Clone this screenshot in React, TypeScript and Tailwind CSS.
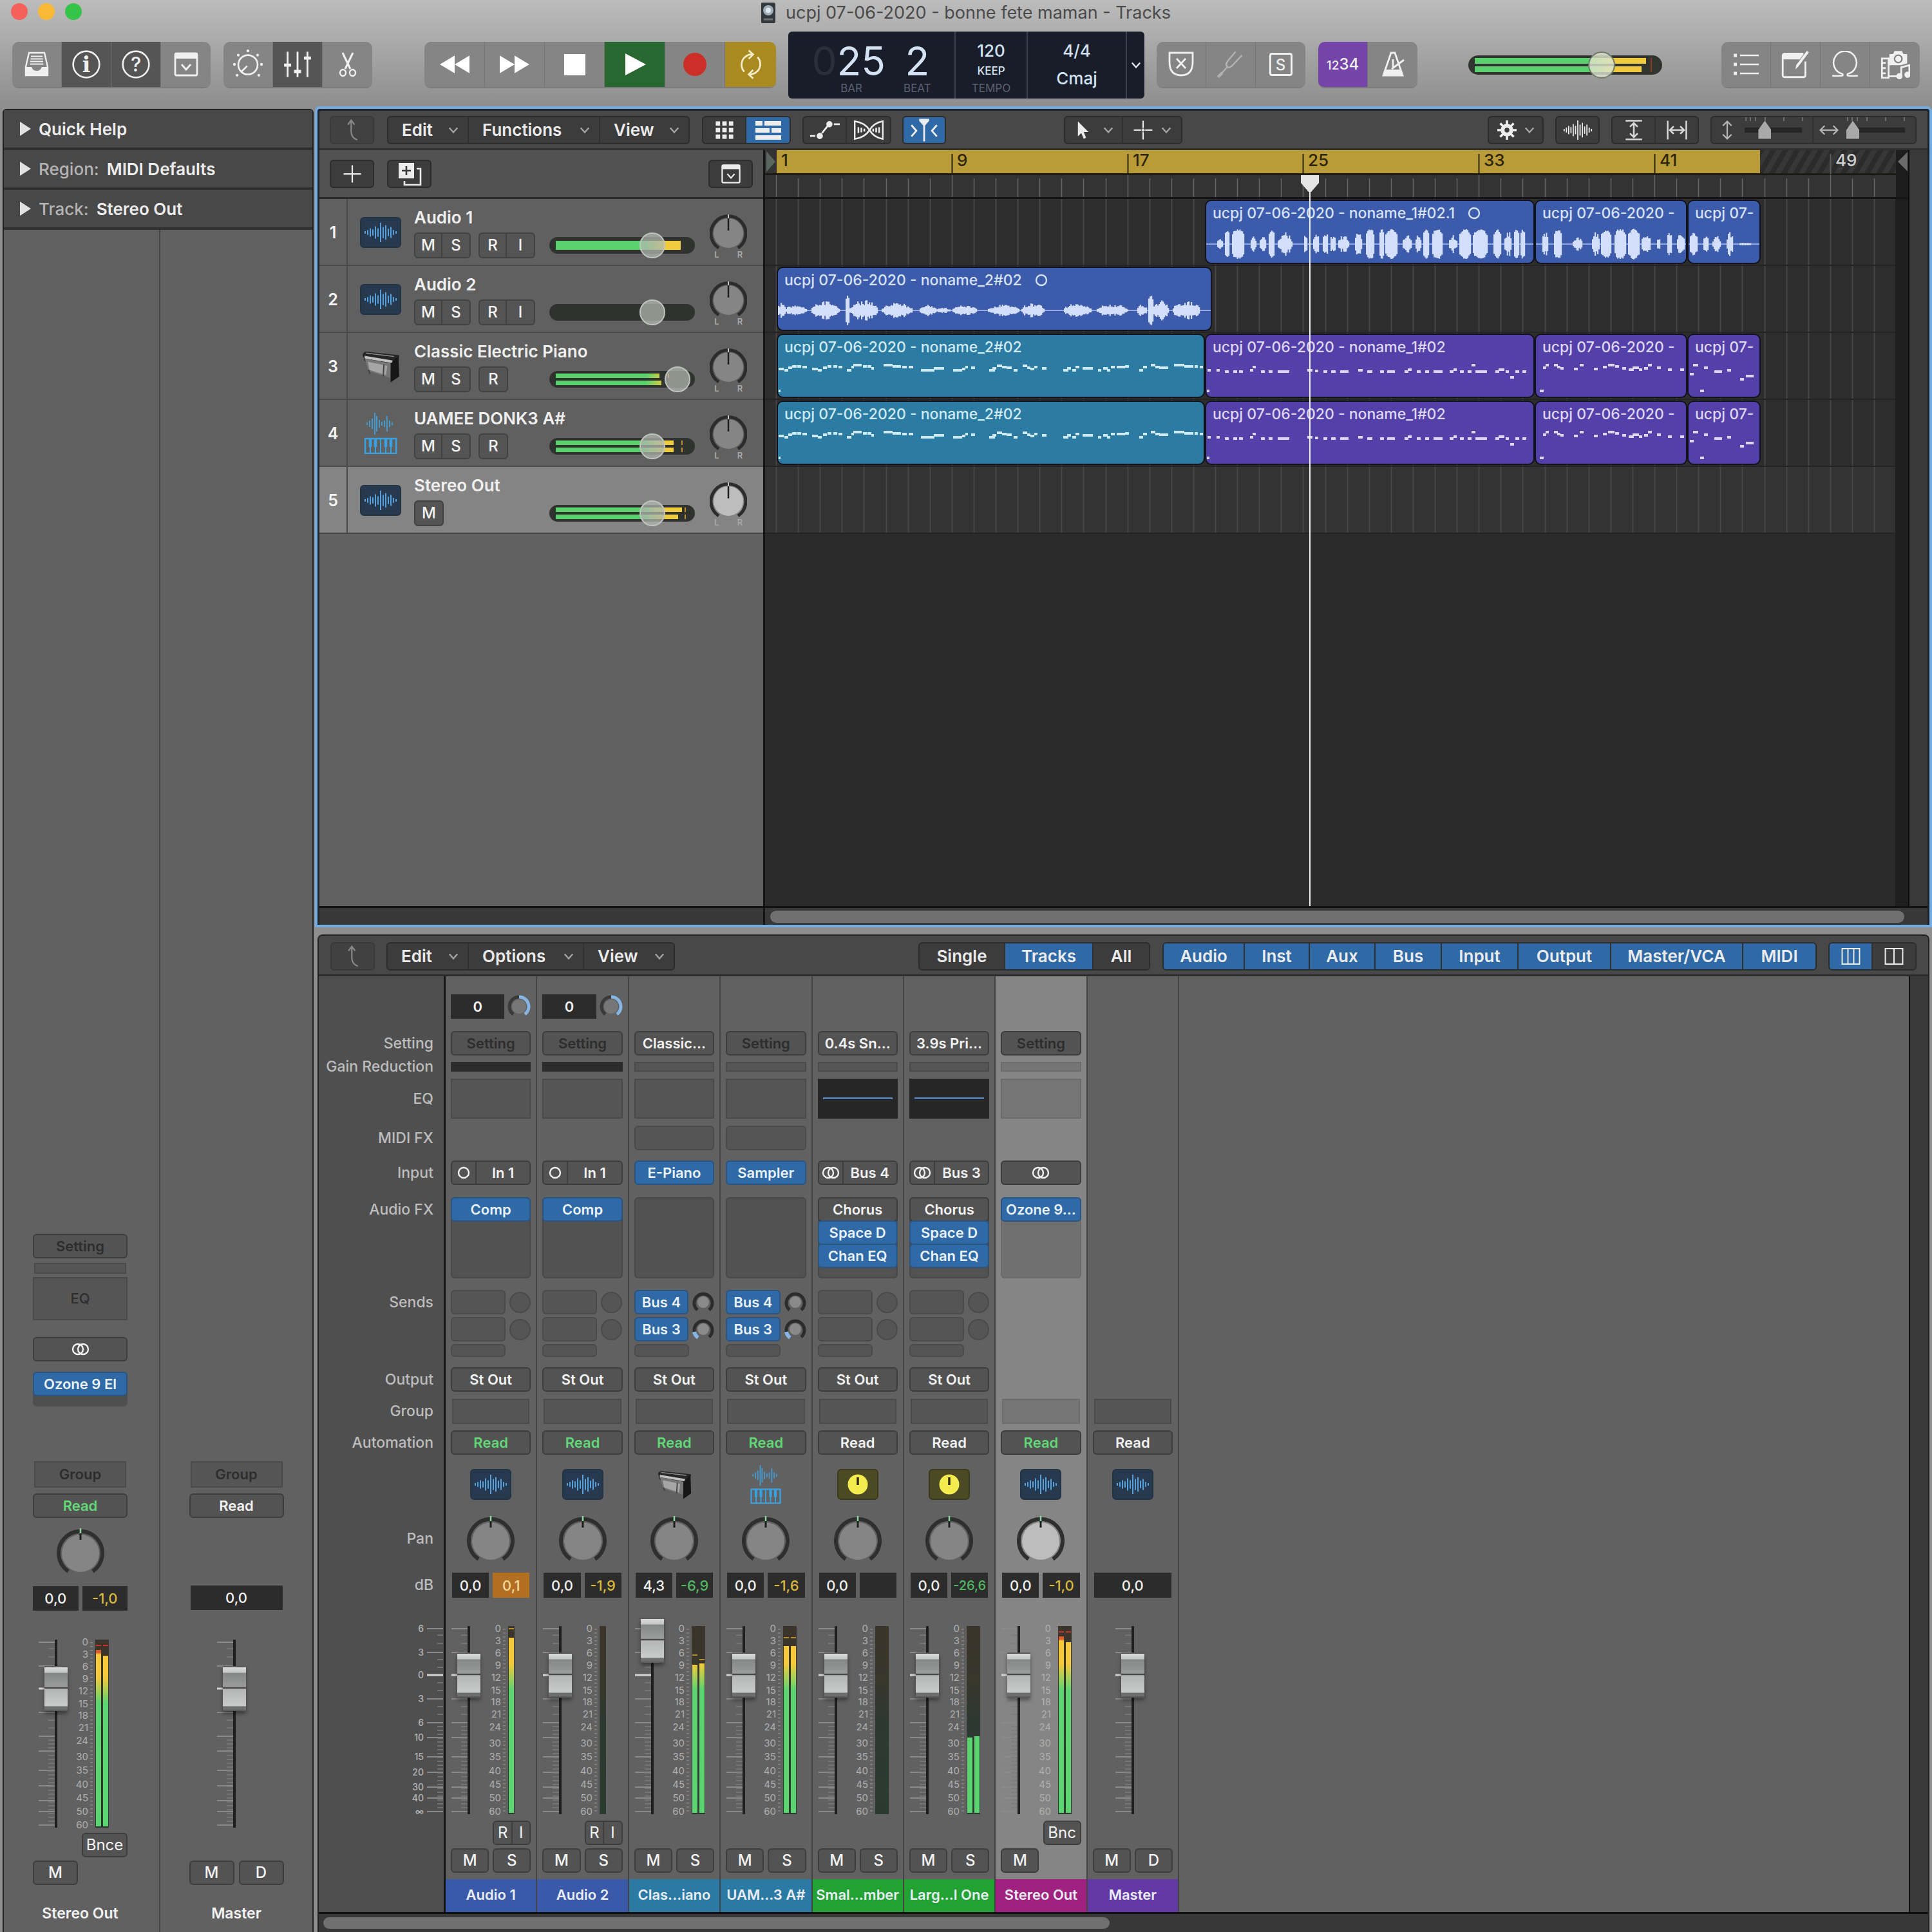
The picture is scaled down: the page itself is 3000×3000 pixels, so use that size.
import type { ReactNode } from 'react'
import clsx from 'clsx'

// ---------------------------------------------------------------------------
// Session data
// ---------------------------------------------------------------------------

type Blob = [from: number, to: number, amp: number]
type Note = [x: number, y: number, w: number]
type IconKind = 'audio' | 'piano' | 'sampler' | 'aux'

type Region = {
  x: number
  w: number
  name: string
  tone: 'blue' | 'teal' | 'violet'
  loop?: boolean
  wave?: Blob[]
  mid?: number
  notes?: Note[]
}

type Track = {
  name: string
  icon: IconKind
  buttons: string[][]
  value: number
  levels: number[]
  peaks?: number[]
  selected?: boolean
  regions: Region[]
}

const WAVE_A: Blob[] = [
  [17, 26, 0.4], [29, 36, 0.95], [40, 59, 1], [69, 78, 0.65], [83, 93, 0.65], [97, 106, 0.95],
  [111, 134, 0.8], [152, 157, 0.7], [166, 175, 0.8], [181, 189, 0.9], [193, 201, 0.7], [205, 222, 0.6],
  [231, 242, 0.9], [248, 261, 1], [269, 276, 1], [278, 297, 1], [305, 319, 0.6], [325, 334, 0.7],
  [337, 346, 0.95], [351, 367, 1], [377, 390, 0.6], [393, 411, 1], [414, 437, 1], [446, 458, 0.95],
  [463, 474, 0.9], [478, 486, 1], [488, 495, 0.95],
]
const WAVE_B: Blob[] = [
  [10, 19, 0.8], [28, 40, 1], [57, 72, 0.45], [87, 99, 0.8], [101, 117, 0.95], [122, 140, 1],
  [143, 161, 1], [164, 178, 0.7], [188, 193, 0.5], [204, 211, 0.9], [219, 231, 0.8],
]
const WAVE_C: Blob[] = [[2, 14, 0.9], [23, 31, 0.75], [37, 50, 0.55], [59, 69, 0.8], [79, 97, 0.12]]
const WAVE_D: Blob[] = [
  [0, 12, 0.5], [12, 45, 0.38], [52, 96, 0.6], [105, 111, 1], [111, 155, 0.68], [161, 209, 0.5],
  [220, 246, 0.38], [246, 268, 0.18], [271, 309, 0.36], [326, 375, 0.38], [378, 414, 0.5],
  [444, 487, 0.48], [495, 544, 0.42], [558, 573, 0.4], [575, 583, 1], [583, 607, 0.65], [613, 655, 0.65],
]

const NOTES_TEAL: Note[] = [
  [1, 52, 8], [10, 54, 6], [16, 50, 6], [22, 48, 7], [30, 48, 6], [38, 49, 7],
  [53, 52, 9], [62, 54, 6], [70, 50, 6], [77, 48, 6], [86, 48, 6], [94, 49, 6],
  [107, 54, 7], [114, 49, 4], [117, 46, 13], [132, 48, 6], [139, 48, 6], [145, 51, 4],
  [164, 46, 14], [178, 48, 13], [193, 49, 7], [203, 49, 7], [222, 54, 21], [242, 51, 16],
  [272, 54, 14], [286, 52, 5], [291, 49, 4], [300, 50, 6], [328, 54, 9], [333, 51, 6], [340, 47, 8],
  [348, 49, 7], [355, 50, 8], [366, 54, 6], [380, 47, 7], [387, 50, 5], [392, 52, 6], [398, 49, 5],
  [410, 51, 7], [443, 54, 8], [449, 51, 6], [457, 54, 6], [462, 49, 6], [473, 51, 16], [497, 54, 5],
  [505, 51, 7], [511, 54, 5], [517, 49, 6], [526, 49, 13], [539, 48, 6], [561, 54, 6], [567, 49, 6],
  [579, 46, 7], [586, 49, 7], [592, 50, 14], [615, 46, 16], [631, 48, 14], [647, 48, 5], [655, 49, 5],
  [1, 86, 3],
]
const NOTES_V1: Note[] = [
  [2, 54, 5], [16, 54, 5], [29, 56, 6], [42, 56, 6], [51, 56, 6], [68, 54, 5], [72, 49, 5], [85, 56, 6],
  [97, 56, 6], [111, 56, 18], [157, 54, 8], [169, 55, 5], [182, 56, 6], [194, 56, 7], [208, 56, 13],
  [236, 54, 7], [250, 56, 8], [270, 56, 6], [281, 56, 12], [308, 56, 6], [313, 53, 6], [327, 56, 6],
  [340, 56, 6], [353, 56, 14], [378, 56, 6], [384, 53, 5], [394, 56, 6], [406, 56, 6], [412, 46, 6],
  [418, 56, 18], [449, 56, 6], [454, 53, 9], [465, 56, 5], [472, 65, 6], [480, 56, 6], [491, 56, 6],
  [1, 86, 4],
]
const NOTES_V2: Note[] = [
  [11, 50, 5], [15, 46, 5], [28, 46, 6], [33, 49, 5], [38, 51, 5], [59, 52, 6], [68, 46, 6], [90, 52, 6],
  [104, 49, 6], [112, 46, 10], [123, 48, 6], [134, 51, 6], [144, 53, 8], [150, 50, 10], [160, 53, 5],
  [168, 51, 6], [174, 46, 6], [188, 50, 6], [205, 53, 6], [224, 53, 6], [6, 86, 6],
]
const NOTES_V3: Note[] = [
  [2, 60, 6], [7, 46, 8], [24, 50, 6], [40, 56, 12], [60, 54, 6], [80, 68, 6], [89, 63, 12], [18, 86, 6],
]

const MIDI_REGIONS: Region[] = [
  { x: 18, w: 665, name: 'ucpj 07-06-2020 - noname_2#02', tone: 'teal', notes: NOTES_TEAL },
  { x: 683, w: 512, name: 'ucpj 07-06-2020 - noname_1#02', tone: 'violet', notes: NOTES_V1 },
  { x: 1195, w: 237, name: 'ucpj 07-06-2020 -', tone: 'violet', notes: NOTES_V2 },
  { x: 1432, w: 114, name: 'ucpj 07-', tone: 'violet', notes: NOTES_V3 },
]

const TRACKS: Track[] = [
  {
    name: 'Audio 1', icon: 'audio', buttons: [['M', 'S'], ['R', 'I']], value: 75, levels: [194],
    regions: [
      { x: 683, w: 512, name: 'ucpj 07-06-2020 - noname_1#02.1', tone: 'blue', loop: true, wave: WAVE_A, mid: 67 },
      { x: 1195, w: 237, name: 'ucpj 07-06-2020 -', tone: 'blue', wave: WAVE_B, mid: 67 },
      { x: 1432, w: 114, name: 'ucpj 07-', tone: 'blue', wave: WAVE_C, mid: 67 },
    ],
  },
  {
    name: 'Audio 2', icon: 'audio', buttons: [['M', 'S'], ['R', 'I']], value: 75, levels: [],
    regions: [
      { x: 18, w: 676, name: 'ucpj 07-06-2020 - noname_2#02', tone: 'blue', loop: true, wave: WAVE_D, mid: 66 },
    ],
  },
  {
    name: 'Classic Electric Piano', icon: 'piano', buttons: [['M', 'S'], ['R']], value: 96,
    levels: [161, 164], peaks: [176], regions: MIDI_REGIONS,
  },
  {
    name: 'UAMEE DONK3 A#', icon: 'sampler', buttons: [['M', 'S'], ['R']], value: 75,
    levels: [183, 183], peaks: [197, 197], regions: MIDI_REGIONS,
  },
  {
    name: 'Stereo Out', icon: 'audio', buttons: [['M']], value: 75, levels: [196, 190],
    peaks: [202, 202], selected: true, regions: [],
  },
]

type Meter = { levels: number[]; peaks?: number[]; hot?: boolean; mono?: boolean }

type Channel = {
  name: string
  tint: string
  gain?: boolean
  setting?: string
  reduction?: boolean
  curve?: boolean
  instrument?: string
  input?: string
  stereo?: boolean
  fx: string[]
  sends?: string[]
  output?: boolean
  read: boolean
  icon: IconKind
  pan?: boolean
  db: string
  peak?: string
  peakTone?: string
  fader: number
  meter?: Meter
  extra?: string[]
  buttons: string[]
  selected?: boolean
}

// fader and meter values are pixels on the 292px travel
const CHANNELS: Channel[] = [
  {
    name: 'Audio 1', tint: 'bg-[#3b59a9]', gain: true, setting: '', reduction: true, input: 'In 1',
    fx: ['Comp'], sends: [], output: true, read: true, icon: 'audio', pan: true, db: '0,0', peak: '0,1',
    peakTone: 'bg-[#b26f22] text-[#f3d9a0]', fader: 216, meter: { levels: [18], peaks: [4], mono: true },
    extra: ['R', 'I'], buttons: ['M', 'S'],
  },
  {
    name: 'Audio 2', tint: 'bg-[#3b59a9]', gain: true, setting: '', reduction: true, input: 'In 1',
    fx: ['Comp'], sends: [], output: true, read: true, icon: 'audio', pan: true, db: '0,0', peak: '-1,9',
    peakTone: 'text-[#dcb93c]', fader: 216, meter: { levels: [292], mono: true }, extra: ['R', 'I'],
    buttons: ['M', 'S'],
  },
  {
    name: 'Clas...iano', tint: 'bg-[#2b7aa3]', setting: 'Classic...', instrument: 'E-Piano', fx: [],
    sends: ['Bus 4', 'Bus 3'], output: true, read: true, icon: 'piano', pan: true, db: '4,3', peak: '-6,9',
    peakTone: 'text-[#52b862]', fader: 270, meter: { levels: [60, 58], peaks: [45, 52] }, buttons: ['M', 'S'],
  },
  {
    name: 'UAM...3 A#', tint: 'bg-[#2b7aa3]', setting: '', instrument: 'Sampler', fx: [],
    sends: ['Bus 4', 'Bus 3'], output: true, read: true, icon: 'sampler', pan: true, db: '0,0', peak: '-1,6',
    peakTone: 'text-[#dcb93c]', fader: 216, meter: { levels: [31, 31], peaks: [18, 18] }, buttons: ['M', 'S'],
  },
  {
    name: 'Smal...mber', tint: 'bg-[#23a234]', setting: '0.4s Sn...', curve: true, input: 'Bus 4', stereo: true,
    fx: ['Chorus', 'Space D', 'Chan EQ'], sends: [], output: true, read: false, icon: 'aux', pan: true,
    db: '0,0', peak: '', fader: 216, meter: { levels: [292, 292] }, buttons: ['M', 'S'],
  },
  {
    name: 'Larg...l One', tint: 'bg-[#23a234]', setting: '3.9s Pri...', curve: true, input: 'Bus 3', stereo: true,
    fx: ['Chorus', 'Space D', 'Chan EQ'], sends: [], output: true, read: false, icon: 'aux', pan: true,
    db: '0,0', peak: '-26,6', peakTone: 'text-[#52b862]', fader: 216, meter: { levels: [173, 171] },
    buttons: ['M', 'S'],
  },
  {
    name: 'Stereo Out', tint: 'bg-[#a0217f]', setting: '', input: '', stereo: true, fx: ['Ozone 9...'], read: true,
    icon: 'audio', pan: true, db: '0,0', peak: '-1,0', peakTone: 'text-[#dcb93c]', fader: 216,
    meter: { levels: [16, 25], peaks: [9, 9], hot: true }, extra: ['Bnc'], buttons: ['M'], selected: true,
  },
  {
    name: 'Master', tint: 'bg-[#6439a6]', fx: [], read: false, icon: 'audio', db: '0,0', fader: 216,
    buttons: ['M', 'D'],
  },
]

// Rows of a mixer strip. The label column uses the same ones so both line up.
const ROW = {
  gain: 'mt-7 h-[38px]',
  setting: 'mt-[19px] h-[38px]',
  reduction: 'mt-[10px] h-[15px]',
  eq: 'mt-[11px] h-[62px]',
  midi: 'mt-[11px] h-[38px]',
  input: 'mt-4 h-[38px]',
  fx: 'mt-[19px] h-[126px]',
  sends: 'mt-[18px] h-[104px]',
  output: 'mt-4 h-[38px]',
  group: 'mt-[11px] h-[39px]',
  read: 'mt-[10px] h-[38px]',
  icon: 'mt-[21px] h-[49px]',
  pan: 'mt-[23px] h-[74px]',
  db: 'mt-4 h-[39px]',
  fader: 'mt-[44px] h-[292px]',
  extra: 'mt-[10px] h-[38px]',
  mute: 'mt-[5px] h-[38px]',
  name: 'mt-[10px] h-[51px]',
}

const METER_MARKS: [string, number][] = [
  ['0', 4], ['3', 23], ['6', 42], ['9', 61], ['12', 80], ['15', 100], ['18', 118], ['21', 137],
  ['24', 157], ['30', 182], ['35', 203], ['40', 225], ['45', 246], ['50', 267], ['60', 288],
]
const FADER_MARKS: [string, number][] = [
  ['6', 4], ['3', 41], ['0', 76], ['3', 113], ['6', 150], ['10', 173], ['15', 203], ['20', 227],
  ['30', 250], ['40', 267], ['∞', 288],
]
const MINOR_MARKS = [14, 27, 52, 64, 88, 100, 125, 137].concat(
  Array.from({ length: 22 }, (_, i) => 156 + i * 6),
)

// ---------------------------------------------------------------------------
// Icons
// ---------------------------------------------------------------------------

function Glyph({ children, size = 40, fill = 'none', w = 2.4 }: { children: ReactNode; size?: number; fill?: string; w?: number }) {
  return (
    <svg
      width={size}
      height={size}
      viewBox="0 0 40 40"
      fill={fill}
      stroke="currentColor"
      strokeWidth={w}
      className="shrink-0"
      aria-hidden="true"
    >
      {children}
    </svg>
  )
}

const Chevron = ({ className = 'text-[#a5a5a5]' }: { className?: string }) => (
  <svg width="16" height="12" viewBox="0 0 18 12" className={clsx('shrink-0', className)} aria-hidden="true">
    <path d="M2 2l7 8 7-8" fill="none" stroke="currentColor" strokeWidth="2.6" />
  </svg>
)

const LibraryIcon = () => (
  <Glyph>
    <path d="M8 2h24l5 22v13H3V24z" />
    <path d="M11 7.500h18M10.500 11.500h19M10 15.500h20M9.500 19.500h21" strokeWidth="1.800" />
    <path d="M3 24h9q2 6 8 6t8-6h9v13H3z" fill="currentColor" stroke="none" />
  </Glyph>
)
const InfoIcon = () => (
  <Glyph size={44}>
    <circle cx="20" cy="20" r="18.500" />
    <text x="20" y="31" textAnchor="middle" fontFamily="DejaVu Serif" fontWeight="700" fontSize="30" fill="currentColor" stroke="none">i</text>
  </Glyph>
)
const HelpIcon = () => (
  <Glyph size={44}>
    <circle cx="20" cy="20" r="18.500" />
    <text x="20" y="30" textAnchor="middle" fontSize="28" fontWeight="500" fill="currentColor" stroke="none">?</text>
  </Glyph>
)
const DropPanelIcon = ({ size = 40 }: { size?: number }) => (
  <Glyph size={size} w={2.8}>
    <rect x="3" y="3" width="34" height="34" rx="2" />
    <path d="M3 3h34v8H3z" fill="currentColor" stroke="none" />
    <path d="M13 20l7 8 7-8" />
  </Glyph>
)
const DialIcon = () => (
  <Glyph size={48} w={2.2}>
    <circle cx="20" cy="20.500" r="12.500" />
    <path d="M11 30l8-8" />
    {[[20, 2.5], [7.5, 8], [32.5, 8], [2.5, 20], [37.5, 20], [6, 34], [34, 34]].map(([x, y]) => (
      <circle key={`${x}-${y}`} cx={x} cy={y} r="1.800" fill="currentColor" stroke="none" />
    ))}
  </Glyph>
)
const MixerIcon = () => (
  <Glyph size={44} w={2.6}>
    <path d="M6 2v36M20 2v36M34 2v36" />
    <path d="M1 21h10M15 30h10M29 11h10" strokeWidth="4.500" />
  </Glyph>
)
const ScissorsIcon = () => (
  <Glyph>
    <path d="M12 2l12 25M28 2L16 27" strokeWidth="3" />
    <ellipse cx="12.500" cy="33" rx="4.500" ry="5" />
    <ellipse cx="27.500" cy="33" rx="4.500" ry="5" />
  </Glyph>
)
const RewindIcon = () => (
  <Glyph size={46} fill="currentColor" w={0}><path d="M20 8v24L0 20zM40 8v24L20 20z" /></Glyph>
)
const ForwardIcon = () => (
  <Glyph size={46} fill="currentColor" w={0}><path d="M0 8v24l20-12zM20 8v24l20-12z" /></Glyph>
)
const CycleIcon = () => (
  <Glyph size={46} w={2.4}>
    <path d="M11 30A14 14 0 0 1 22 6.500" />
    <path d="M17 1l6 5.500-6 6" />
    <path d="M29 10a14 14 0 0 1-11 23.500" />
    <path d="M23 39l-6-5.500 6-6" />
  </Glyph>
)
const ShieldIcon = () => (
  <Glyph w={2.8}>
    <path d="M2 2h36v14q0 21-18 21T2 16z" />
    <path d="M13 11l14 15M27 11L13 26" />
  </Glyph>
)
const ForkIcon = () => (
  <Glyph size={44} w={2.2}>
    <path d="M3 37l13-14M27 2L16 15q-4 5-1 8t7-1L36 7" />
    <path d="M2 38l6-6" strokeWidth="4" />
  </Glyph>
)
const MetronomeIcon = () => (
  <Glyph w={2.8}>
    <path d="M17 2h6l12 35H5z" />
    <path d="M8 28h24l4 10H4z" fill="currentColor" stroke="none" />
    <path d="M18 27L37 13M20 12v12" />
  </Glyph>
)
const ListIcon = () => (
  <Glyph>
    <path d="M11 6h29M11 20h29M11 34h29" />
    <path d="M1 6h5M1 20h5M1 34h5" strokeWidth="5" />
  </Glyph>
)
const NotePadIcon = () => (
  <Glyph size={44} w={2.6}>
    <path d="M34 16v19q0 3-3 3H5q-3 0-3-3V8q0-3 3-3h26" />
    <path d="M2 5h30l-6 8H2z" fill="currentColor" stroke="none" />
    <path d="M39 3L24 23l-4 4 1-6L36 1z" fill="currentColor" stroke="none" />
  </Glyph>
)
const LoopIcon = () => (
  <Glyph size={42}>
    <path d="M1 37h13q4 0 2-3A17 17 0 1 1 24 34q-2 3 2 3h13" />
  </Glyph>
)
const MediaIcon = () => (
  <Glyph size={46} w={2.4}>
    <path d="M2 12h9v26H2zM2 18h5M2 25h5M2 32h5M11 36h12" />
    <path d="M12 6h5l2-4h10l2 4h5v15H12z" fill="currentColor" stroke="none" />
    <circle cx="24" cy="12.500" r="5" className="stroke-[#858585]" strokeWidth="2" />
    <path d="M28 36V24l11-3v13" className="stroke-[#858585]" strokeWidth="6" />
    <path d="M28 36V24l11-3v13" />
    <circle cx="25.500" cy="36" r="3" fill="currentColor" />
    <circle cx="36.500" cy="34" r="3" fill="currentColor" />
  </Glyph>
)
const UpIcon = () => (
  <Glyph size={34} w={2.6}>
    <path d="M29 38q-11-4-11-16V3M12 10l6-8 6 8" />
  </Glyph>
)
const GridIcon = () => (
  <Glyph size={34} fill="currentColor" w={0}>
    {[4, 16, 28].map((x) => [4, 16, 28].map((y) => <rect key={`${x}${y}`} x={x} y={y} width="8" height="8" />))}
  </Glyph>
)
const RegionsIcon = () => (
  <Glyph size={40} fill="currentColor" w={0}>
    <path d="M0 6h11v7H0zM14 6h26v7H14zM0 17h22v7H0zM25 17h15v7H25zM0 28h40v7H0z" />
  </Glyph>
)
const AutomationIcon = () => (
  <Glyph size={46} w={2.4}>
    <path d="M0 28h7M16 24l8-10M32 12h8" />
    <circle cx="13" cy="28" r="3" fill="currentColor" />
    <circle cx="26" cy="12" r="3" fill="currentColor" />
  </Glyph>
)
const FlexIcon = () => (
  <Glyph size={46} w={2.2}>
    <path d="M1 8v24q14-2 20-12T39 8v24q-12-2-18-12T1 8z" />
    <path d="M6 16v8M10 17v6M30 17v6M34 16v8M14 18v4M26 18v4" />
  </Glyph>
)
const CatchIcon = () => (
  <Glyph size={44} w={2.6}>
    <path d="M2 13l7 8-7 8M38 13l-7 8 7 8M20 8v28" />
    <path d="M13 4h14v3l-7 8-7-8z" fill="currentColor" stroke="none" />
  </Glyph>
)
const PointerIcon = () => (
  <Glyph size={30} fill="currentColor" w={0}><path d="M9 2v31l7-7 5 12 5-2-5-12h10z" /></Glyph>
)
const CrossIcon = ({ size = 32 }: { size?: number }) => (
  <Glyph size={size} w={2.6}><path d="M20 2v14M20 24v14M2 20h14M24 20h14M17 20h6M20 17v6" /></Glyph>
)
const GearIcon = () => (
  <Glyph size={30} w={5}>
    <circle cx="20" cy="20" r="9" strokeWidth="8" />
    <path d="M20 0v8M20 32v8M0 20h8M32 20h8M6 6l6 6M28 28l6 6M34 6l-6 6M12 28l-6 6" />
  </Glyph>
)

const BARS = [4, 8, 14, 10, 20, 14, 32, 18, 24, 12, 18, 8, 4]

function WaveBars({ width, height, color = 'currentColor' }: { width: number; height: number; color?: string }) {
  return (
    <svg width={width} height={height} viewBox="0 0 52 36" preserveAspectRatio="none" className="shrink-0" aria-hidden="true">
      {BARS.map((h, i) => (
        <path key={i} d={`M${2 + i * 4} ${18 - h / 2}v${h}`} stroke={color} strokeWidth="2" />
      ))}
    </svg>
  )
}

const PianoIcon = ({ size }: { size: number }) => (
  <svg width={size} height={size} viewBox="0 0 60 50" className="shrink-0" aria-hidden="true">
    <path d="M3 7q2-5 8-4l47 5-4 15-48-6z" fill="#262626" />
    <path d="M6 9l42 7-1 4L6 13z" fill="#c2c2c2" />
    <path d="M6 13l41 8-3 21-32-10z" fill="#777" />
    <path d="M11 18l29 6-2 14-25-8z" fill="#a6a6a6" />
    <path d="M57 9l1 31-13 9V21z" fill="#171717" />
    <path d="M8 5l42 5" stroke="#8d8d8d" strokeWidth="1.500" />
    <path d="M35 22l-1 18M12 30l2 6" stroke="#444" strokeWidth="2" />
  </svg>
)

const SamplerIcon = ({ size }: { size: number }) => (
  <svg width={size} height={size} viewBox="0 0 56 64" className="shrink-0" aria-hidden="true">
    {[[7, 4], [11, 10], [15, 16], [19, 34], [22, 24], [26, 12], [30, 6], [34, 10], [38, 24], [42, 10], [46, 5]].map(([x, h]) => (
      <path key={x} d={`M${x} ${17 - h / 2}v${h}`} stroke="#4699cc" strokeWidth="2" />
    ))}
    <rect x="4" y="40" width="48" height="23" fill="none" stroke="#3aa0e0" strokeWidth="2.500" />
    <path d="M12 40v23M20 40v23M28 40v23M36 40v23M44 40v23" stroke="#3aa0e0" strokeWidth="2" />
    <path d="M12 40v13M20 40v13M36 40v13M44 40v13" stroke="#3aa0e0" strokeWidth="4.500" />
  </svg>
)

function TrackIcon({ kind, small }: { kind: IconKind; small?: boolean }) {
  if (kind === 'piano') return <PianoIcon size={small ? 56 : 62} />
  if (kind === 'sampler') return <SamplerIcon size={small ? 60 : 64} />
  if (kind === 'aux') {
    return (
      <span className="grid h-12 w-16 place-items-center rounded-md border-2 border-[#3a391c] bg-[#4b4a22]">
        <svg width="34" height="34" viewBox="0 0 34 34" aria-hidden="true">
          <circle cx="17" cy="17" r="15.500" fill="#f4ec4e" />
          <path d="M17 6v12" stroke="#2d2b12" strokeWidth="3.500" />
        </svg>
      </span>
    )
  }
  return (
    <span className="grid h-12 w-16 place-items-center rounded-md border-2 border-[#243447] bg-[#26394f]">
      <WaveBars width={52} height={34} color="#56a0dc" />
    </span>
  )
}

const StereoIcon = () => (
  <svg width="28" height="20" viewBox="0 0 28 20" fill="none" stroke="currentColor" strokeWidth="2.400" aria-hidden="true">
    <circle cx="10" cy="10" r="8" />
    <circle cx="18" cy="10" r="8" />
  </svg>
)
const MonoIcon = () => (
  <svg width="20" height="20" viewBox="0 0 20 20" fill="none" stroke="currentColor" strokeWidth="2.400" aria-hidden="true">
    <circle cx="10" cy="10" r="8" />
  </svg>
)

function Knob({ size, bright, label }: { size: number; bright?: boolean; label: string }) {
  return (
    <svg width={size} height={size} viewBox="0 0 74 74" role="img" aria-label={label} className="shrink-0">
      <path d="M18 69A34 34 0 1 1 56 69" fill="none" stroke="#2e302f" strokeWidth="6" />
      <circle cx="37" cy="41" r="29" fill={bright ? '#bdbdbd' : '#858585'} />
      <path d="M37 10v10" stroke="#1f1f1f" strokeWidth="3" />
      <path d="M37 2v8" stroke="#8fd6a0" strokeWidth="2.500" />
    </svg>
  )
}

function TrackPan({ bright, label }: { bright?: boolean; label: string }) {
  return (
    <svg width="58" height="72" viewBox="0 0 58 72" role="img" aria-label={label} className="shrink-0">
      <path d="M14 54A27 27 0 1 1 44 54" fill="none" stroke="#2b2d2c" strokeWidth="5" />
      <circle cx="29" cy="31" r="23" fill={bright ? '#bdbdbd' : '#858585'} />
      <path d="M29 8v19" stroke="#1c1c1c" strokeWidth="2.500" />
      <path d="M29 2v6" stroke="#c9c9c9" strokeWidth="2" />
      <text x="11" y="69" textAnchor="middle" fontSize="13" fontWeight="600" fill="#a8a8a8">L</text>
      <text x="47" y="69" textAnchor="middle" fontSize="13" fontWeight="600" fill="#a8a8a8">R</text>
    </svg>
  )
}

// ---------------------------------------------------------------------------
// Window toolbar
// ---------------------------------------------------------------------------

function ToolButton({ label, children, className }: { label: string; children: ReactNode; className?: string }) {
  return (
    <button
      type="button"
      aria-label={label}
      className={clsx('grid h-full place-items-center border-r border-[#757575] last:border-r-0', className ?? 'w-[77px] bg-[#858585] text-[#f0f0f0]')}
    >
      {children}
    </button>
  )
}

const ToolGroup = ({ children, className }: { children: ReactNode; className?: string }) => (
  <div className={clsx('flex h-[72px] overflow-hidden rounded-[10px] border-b-2 border-[#7a7a7a]', className)}>{children}</div>
)

function Lcd() {
  return (
    <div className="ml-[19px] flex h-[104px] w-[553px] rounded-md bg-[#191d2a] text-[#d3e2f2]">
      <div className="flex w-[260px] justify-center gap-7 border-r-2 border-[#3a3f4c] pt-4">
        <div className="flex flex-col items-end leading-none">
          <span className="text-[62px] leading-[60px]"><span className="text-[#2a2f3c]">0</span>25</span>
          <span className="mr-9 mt-1 text-[17px] text-[#5b6170]">BAR</span>
        </div>
        <div className="flex flex-col items-center leading-none">
          <span className="text-[62px] leading-[60px]">2</span>
          <span className="mt-1 text-[17px] text-[#5b6170]">BEAT</span>
        </div>
      </div>
      <div className="flex w-[112px] flex-col items-center border-r-2 border-[#3a3f4c] pt-[14px] font-medium">
        <span className="text-[26px] leading-8">120</span>
        <span className="mt-[6px] text-[17px] leading-[18px]">KEEP</span>
        <span className="mt-[10px] text-[17px] font-normal leading-4 text-[#5b6170]">TEMPO</span>
      </div>
      <div className="flex w-[154px] flex-col items-center border-r-2 border-[#3a3f4c] pt-[14px] text-[26px] font-medium leading-8">
        <span>4/4</span>
        <span className="mt-[11px]">Cmaj</span>
      </div>
      <button type="button" aria-label="Display mode" className="grid flex-1 place-items-center">
        <Chevron className="text-[#e4ecf5]" />
      </button>
    </div>
  )
}

function Toolbar() {
  return (
    <header className="flex h-[165px] shrink-0 flex-col bg-linear-to-b from-[#bcbcbc] to-[#8e8e8e]">
      <div className="relative flex h-10 items-center justify-center">
        <div className="absolute left-[17px] top-[5px] flex gap-4">
          <button type="button" aria-label="Close" className="size-[26px] rounded-full bg-[#f4605a]" />
          <button type="button" aria-label="Minimize" className="size-[26px] rounded-full bg-[#f9b935]" />
          <button type="button" aria-label="Zoom" className="size-[26px] rounded-full bg-[#35c349]" />
        </div>
        <svg width="22" height="32" viewBox="0 0 22 32" className="mr-4" aria-hidden="true">
          <rect width="22" height="32" rx="2" fill="#33383d" />
          <circle cx="11" cy="12" r="8" fill="#9fb0bb" />
          <circle cx="11" cy="12" r="4" fill="#dfe9ee" />
          <path d="M4 26h14" stroke="#6d747a" strokeWidth="3" />
        </svg>
        <h1 className="text-[27px] text-[#4a4a4a]">ucpj 07-06-2020 - bonne fete maman - Tracks</h1>
      </div>
      <div className="flex h-[122px] items-center px-[19px]">
        <ToolGroup>
          <ToolButton label="Library"><LibraryIcon /></ToolButton>
          <ToolButton label="Inspector" className="w-[77px] bg-[#555] text-[#f0f0f0]"><InfoIcon /></ToolButton>
          <ToolButton label="Quick Help" className="w-[77px] bg-[#555] text-[#f0f0f0]"><HelpIcon /></ToolButton>
          <ToolButton label="Toolbar"><DropPanelIcon /></ToolButton>
        </ToolGroup>
        <ToolGroup className="ml-5">
          <ToolButton label="Smart Controls"><DialIcon /></ToolButton>
          <ToolButton label="Mixer" className="w-[77px] bg-[#555] text-[#f0f0f0]"><MixerIcon /></ToolButton>
          <ToolButton label="Editors"><ScissorsIcon /></ToolButton>
        </ToolGroup>
        <ToolGroup className="ml-[81px]">
          <ToolButton label="Rewind" className="w-[94px] bg-[#858585] text-white"><RewindIcon /></ToolButton>
          <ToolButton label="Forward" className="w-[93px] bg-[#858585] text-white"><ForwardIcon /></ToolButton>
          <ToolButton label="Stop" className="w-[93px] bg-[#858585]"><span className="size-[33px] bg-white" /></ToolButton>
          <ToolButton label="Play" className="w-[94px] bg-[#296730] text-white">
            <Glyph size={40} fill="currentColor" w={0}><path d="M5 3v34l32-17z" /></Glyph>
          </ToolButton>
          <ToolButton label="Record" className="w-[93px] bg-[#858585]"><span className="size-9 rounded-full bg-[#cb2f27]" /></ToolButton>
          <ToolButton label="Cycle" className="w-[79px] bg-[#a98a20] text-[#f5ecc8]"><CycleIcon /></ToolButton>
        </ToolGroup>
        <Lcd />
        <ToolGroup className="ml-[19px]">
          <ToolButton label="Replace"><ShieldIcon /></ToolButton>
          <ToolButton label="Tuner" className="w-[77px] bg-[#858585] text-[#b2b2b2]"><ForkIcon /></ToolButton>
          <ToolButton label="Solo">
            <span className="grid size-9 place-items-center rounded-sm border-[3px] border-current text-2xl font-medium">S</span>
          </ToolButton>
        </ToolGroup>
        <ToolGroup className="ml-5">
          <ToolButton label="Count In" className="w-[77px] bg-[#7444a8] text-[#f0f0f0]">
            <span className="flex items-baseline text-[19px] font-medium">12<span className="text-2xl">34</span></span>
          </ToolButton>
          <ToolButton label="Metronome"><MetronomeIcon /></ToolButton>
        </ToolGroup>
        <div className="relative ml-[79px] h-[30px] w-[301px] rounded-full bg-[#32342f] px-[10px] py-1">
          <div className="flex h-full flex-col gap-1">
            <div className="h-[9px] w-[266px] bg-[linear-gradient(90deg,#5bd06f_66%,#f0c93c_82%)]" />
            <div className="h-[9px] w-[259px] bg-[linear-gradient(90deg,#5bd06f_68%,#f0c93c_84%)]" />
          </div>
          <div className="absolute right-4 top-1 h-[22px] w-[2px] bg-[#8b3a26]" />
          <input
            type="range"
            aria-label="Master volume"
            defaultValue={72}
            className="absolute inset-0 h-full w-full appearance-none bg-transparent [&::-webkit-slider-thumb]:size-[42px] [&::-webkit-slider-thumb]:appearance-none [&::-webkit-slider-thumb]:rounded-full [&::-webkit-slider-thumb]:border-2 [&::-webkit-slider-thumb]:border-[#6f7a68] [&::-webkit-slider-thumb]:bg-[#dfe6cfcc]"
          />
        </div>
        <ToolGroup className="ml-auto">
          <ToolButton label="List Editors"><ListIcon /></ToolButton>
          <ToolButton label="Note Pads"><NotePadIcon /></ToolButton>
          <ToolButton label="Loop Browser"><LoopIcon /></ToolButton>
          <ToolButton label="Browsers"><MediaIcon /></ToolButton>
        </ToolGroup>
      </div>
    </header>
  )
}

// ---------------------------------------------------------------------------
// Shared channel strip parts
// ---------------------------------------------------------------------------

function Slot({ children, tone = 'plain', className, label }: { children?: ReactNode; tone?: 'plain' | 'blue' | 'dim' | 'green'; className?: string; label?: string }) {
  return (
    <button
      type="button"
      aria-label={label}
      className={clsx(
        'flex items-center justify-center overflow-hidden whitespace-nowrap rounded-md border-2 leading-none',
        tone === 'plain' && 'border-[#3d3d3d] bg-[#535353] text-[#f2f2f2]',
        tone === 'blue' && 'border-[#2a5580] bg-[#2f69a6] text-[#e9f2fc]',
        tone === 'dim' && 'border-[#3d3d3d] bg-[#535353] text-[#2d2d2d]',
        tone === 'green' && 'border-[#3d3d3d] bg-[#535353] text-[#62d878]',
        className ?? '',
      )}
    >
      {children}
    </button>
  )
}

const SLOT_TEXT = 'text-[22px] font-semibold'
const LETTER_TEXT = 'text-2xl font-medium'

const Well = ({ className, light }: { className?: string; light?: boolean }) => (
  <div className={clsx('border-2', light ? 'border-[#6c6c6c] bg-[#757575]' : 'border-[#4a4a4a] bg-[#555]', className)} />
)

function MeterBars({ meter }: { meter: Meter }) {
  const cols = meter.levels.length
  const width = meter.mono ? 10 : 21
  return (
    <svg x="97" width={width} height="292" viewBox={`0 0 ${width} 292`}>
      <rect width={width} height="292" fill="url(#meterOff)" />
      {meter.levels.map((top, i) => {
        const x = meter.mono ? 1 : 1 + i * 11
        return <rect key={i} x={x} y={top} width={8} height={Math.max(0, 290 - top)} fill={meter.hot ? 'url(#meterHot)' : 'url(#meterOn)'} />
      })}
      {meter.peaks?.map((y, i) => (
        <rect key={i} x={1 + (i % cols) * 11} y={y - 1} width="8" height="2" fill={meter.hot ? '#c8322b' : '#b98c2c'} />
      ))}
    </svg>
  )
}

function MeterGradients() {
  return (
    <svg width="0" height="0" className="absolute" aria-hidden="true">
      <defs>
        <linearGradient id="meterOff" gradientUnits="userSpaceOnUse" x1="0" y1="0" x2="0" y2="292">
          <stop offset="0" stopColor="#3b342b" />
          <stop offset="0.300" stopColor="#37372c" />
          <stop offset="0.500" stopColor="#2d3831" />
          <stop offset="1" stopColor="#2b3a2f" />
        </linearGradient>
        <linearGradient id="meterOn" gradientUnits="userSpaceOnUse" x1="0" y1="0" x2="0" y2="292">
          <stop offset="0" stopColor="#f5c93a" />
          <stop offset="0.200" stopColor="#f5c93a" />
          <stop offset="0.340" stopColor="#5bd471" />
          <stop offset="1" stopColor="#5bd471" />
        </linearGradient>
        <linearGradient id="meterHot" gradientUnits="userSpaceOnUse" x1="0" y1="0" x2="0" y2="292">
          <stop offset="0" stopColor="#d5402c" />
          <stop offset="0.070" stopColor="#e0602c" />
          <stop offset="0.080" stopColor="#f5c93a" />
          <stop offset="0.200" stopColor="#f5c93a" />
          <stop offset="0.340" stopColor="#5bd471" />
          <stop offset="1" stopColor="#5bd471" />
        </linearGradient>
      </defs>
    </svg>
  )
}

function Fader({ value, meter, label, className }: { value: number; meter?: Meter; label: string; className?: string }) {
  return (
    <div className={clsx('relative h-[292px]', className)}>
      <svg width="120" height="292" viewBox="0 0 120 292" overflow="visible" className="block" role="img" aria-label={`${label} meter`}>
        <g stroke="#8a8a8a" strokeWidth="2">
          {FADER_MARKS.map(([, y]) => (
            <path key={y} d={`M9 ${y}H34`} stroke={y === 76 ? '#d4d4d4' : undefined} strokeWidth={y === 76 ? 3 : 2} />
          ))}
          {MINOR_MARKS.map((y) => <path key={y} d={`M24 ${y}H34`} strokeWidth="1.500" stroke="#7c7c7c" />)}
        </g>
        <rect x="34" width="4" height="292" fill="#1f1f1f" />
        {meter && (
          <>
            <g fill="#b0b0b0" fontSize="15" textAnchor="end">
              {METER_MARKS.map(([t, y]) => <text key={t} x="86" y={y + 5}>{t}</text>)}
            </g>
            <path d="M91 4V290" stroke="#878787" strokeWidth="4" strokeDasharray="1.500 4.500" />
            <MeterBars meter={meter} />
          </>
        )}
      </svg>
      <input
        type="range"
        aria-label={`${label} volume`}
        min={0}
        max={292}
        defaultValue={value}
        className="absolute -top-[35px] left-[18px] h-[362px] w-9 appearance-none bg-transparent [direction:rtl] [writing-mode:vertical-lr] [&::-webkit-slider-thumb]:h-[70px] [&::-webkit-slider-thumb]:w-9 [&::-webkit-slider-thumb]:appearance-none [&::-webkit-slider-thumb]:border-x-2 [&::-webkit-slider-thumb]:border-[#5c5c5c] [&::-webkit-slider-thumb]:bg-[linear-gradient(180deg,#d9dbdb_0,#c4c6c6_12%,#858787_14%,#9b9d9d_46%,#4b4b4b_47%,#4b4b4b_50%,#b4b6b6_51%,#c9cbcb_90%,#6d6f6f_93%)] [&::-webkit-slider-thumb]:shadow-[0_4px_6px_rgba(0,0,0,0.4)]"
      />
    </div>
  )
}

const Db = ({ children, className }: { children?: ReactNode; className: string }) => (
  <output className={clsx('flex flex-1 items-center justify-center whitespace-nowrap font-medium leading-none', className)}>{children}</output>
)

const DARK_DB = 'bg-[#2c2c2c] text-[22px] text-[#f2f2f2]'

// ---------------------------------------------------------------------------
// Inspector
// ---------------------------------------------------------------------------

function InspectorRow({ label, value }: { label: string; value?: string }) {
  return (
    <button type="button" className="flex h-[62px] w-full items-center border-b-4 border-[#303030] bg-[#484848] pl-[25px] text-left text-[26px] text-[#ececec]">
      <svg width="17" height="22" viewBox="0 0 17 22" className="mr-3" aria-hidden="true"><path d="M0 0l17 11L0 22z" fill="#e2e2e2" /></svg>
      <span className={value ? 'font-medium text-[#b4b4b4]' : 'font-semibold'}>{label}</span>
      {value && <span className="ml-3 font-semibold">{value}</span>}
    </button>
  )
}

const GROUP_WELL = 'mx-[2px] grid h-[41px] place-items-center border-2 border-[#4a4a4a] bg-[#555] text-[22px] font-semibold text-[#2d2d2d]'
const STRIP_NAME = 'mt-[27px] h-[34px] text-center text-[23px] font-semibold leading-[34px] text-[#f2f2f2]'

function Inspector() {
  return (
    <aside className="ml-1 mt-1 flex w-[483px] shrink-0 flex-col rounded-t-md border-x-2 border-t-2 border-[#222] bg-[#616161]">
      <InspectorRow label="Quick Help" />
      <InspectorRow label="Region:" value="MIDI Defaults" />
      <InspectorRow label="Track:" value="Stereo Out" />
      <div className="flex flex-1">
        <section className="flex w-[243px] flex-col justify-end border-r-2 border-[#464646] pb-3 pl-[45px]">
          <div className="flex w-[147px] flex-col">
            <Slot tone="dim" className={clsx(SLOT_TEXT, 'h-[38px]')}>Setting</Slot>
            <Well className="mx-[2px] mt-[7px] h-[17px]" />
            <div className="mt-[5px] grid h-[67px] place-items-center border-2 border-[#4a4a4a] bg-[#555] text-[22px] font-medium text-[#2d2d2d]">EQ</div>
            <Slot className="mt-[26px] h-[38px]" label="Format"><StereoIcon /></Slot>
            <div className="mt-4 h-[54px] rounded-md bg-[#4f4f4f]"><Slot tone="blue" className={clsx(SLOT_TEXT, 'h-[38px] w-full')}>Ozone 9 El</Slot></div>
            <div className={clsx(GROUP_WELL, 'mt-[85px]')}>Group</div>
            <Slot tone="green" className={clsx(SLOT_TEXT, 'mt-[9px] h-[38px]')}>Read</Slot>
            <div className="mt-[14px] flex h-[74px] justify-center"><Knob size={74} label="Pan" /></div>
            <div className="mt-[18px] flex h-[38px] gap-[6px]">
              <Db className={DARK_DB}>0,0</Db>
              <Db className="bg-[#2c2c2c] text-[22px] text-[#dcb93c]">-1,0</Db>
            </div>
            <Fader value={216} label="Inspector Stereo Out" meter={{ levels: [16, 25], peaks: [9, 9], hot: true }} className="mt-[45px]" />
            <Slot className="ml-auto mt-2 h-[38px] w-[71px] text-2xl">Bnce</Slot>
            <Slot className={clsx(LETTER_TEXT, 'mt-[5px] h-[38px] w-[70px]')}>M</Slot>
            <h2 className={STRIP_NAME}>Stereo Out</h2>
          </div>
        </section>
        <section className="flex flex-1 flex-col items-center justify-end pb-3">
          <div className="flex w-[147px] flex-col">
            <div className={GROUP_WELL}>Group</div>
            <Slot className={clsx(SLOT_TEXT, 'mt-[9px] h-[38px]')}>Read</Slot>
            <div className="mx-[2px] mt-[105px] flex h-[38px]"><Db className={DARK_DB}>0,0</Db></div>
            <Fader value={216} label="Inspector Master" className="ml-[34px] mt-[46px]" />
            <div className="mt-[51px] flex h-[38px] gap-[7px]">
              <Slot className={clsx(LETTER_TEXT, 'flex-1')}>M</Slot>
              <Slot className={clsx(LETTER_TEXT, 'flex-1')}>D</Slot>
            </div>
            <h2 className={STRIP_NAME}>Master</h2>
          </div>
        </section>
      </div>
    </aside>
  )
}

// ---------------------------------------------------------------------------
// Tracks area
// ---------------------------------------------------------------------------

const Segments = ({ children, className }: { children: ReactNode; className?: string }) => (
  <div className={clsx('flex h-[44px] shrink-0 divide-x-2 divide-[#313131] overflow-hidden rounded-md border-2 border-[#2c2c2c] bg-[#3c3c3c]', className)}>{children}</div>
)

const MENU_TEXT = 'text-[26px] font-semibold leading-none text-[#ebebeb]'

function MenuButton({ children, className }: { children: ReactNode; className: string }) {
  return (
    <button type="button" aria-haspopup="menu" className={clsx('flex items-center justify-between pl-[21px] pr-[14px]', MENU_TEXT, className)}>
      {children}
      <Chevron />
    </button>
  )
}

function IconButton({ label, children, className }: { label: string; children: ReactNode; className?: string }) {
  return (
    <button type="button" aria-label={label} className={clsx('flex h-full items-center justify-center', className ?? 'w-[67px] text-[#ececec]')}>
      {children}
    </button>
  )
}

function ZoomSlider({ label, value, icon }: { label: string; value: number; icon: ReactNode }) {
  return (
    <label className="flex w-[158px] items-center gap-3 pl-[9px] pr-4 text-[#b5b5b5]">
      {icon}
      <span className="relative flex min-w-0 flex-1">
        <svg width="92" height="8" viewBox="0 0 92 8" className="absolute -top-4 left-0" aria-hidden="true">
          <path d="M2 0v6M9 0v6M17 0v6M32 0v6M61 0v6M90 0v6" stroke="#7d7d7d" strokeWidth="1.500" />
        </svg>
        <input
          type="range"
          aria-label={label}
          defaultValue={value}
          className="h-[8px] w-full min-w-0 appearance-none bg-[#262626] [&::-webkit-slider-thumb]:relative [&::-webkit-slider-thumb]:h-7 [&::-webkit-slider-thumb]:w-[20px] [&::-webkit-slider-thumb]:appearance-none [&::-webkit-slider-thumb]:bg-[#a9a9a9] [&::-webkit-slider-thumb]:[clip-path:polygon(50%_0,100%_50%,100%_100%,0_100%,0_50%)]"
        />
      </span>
    </label>
  )
}

function TracksMenuBar() {
  return (
    <div className="flex h-[61px] shrink-0 items-center border-b-[3px] border-[#303030] bg-[#484848] pl-4 pr-[17px] pt-px">
      <Segments className="opacity-50"><IconButton label="Hierarchy up" className="w-[65px] text-[#c8c8c8]"><UpIcon /></IconButton></Segments>
      <Segments className="ml-5">
        <MenuButton className="w-[125px]">Edit</MenuButton>
        <MenuButton className="w-[204px]">Functions</MenuButton>
        <MenuButton className="w-[137px]">View</MenuButton>
      </Segments>
      <Segments className="ml-[19px]">
        <IconButton label="Live Loops grid"><GridIcon /></IconButton>
        <IconButton label="Tracks view" className="w-[67px] bg-[#2f69a6] text-[#ececec]"><RegionsIcon /></IconButton>
      </Segments>
      <Segments className="ml-[18px]">
        <IconButton label="Automation"><AutomationIcon /></IconButton>
        <IconButton label="Flex"><FlexIcon /></IconButton>
      </Segments>
      <Segments className="ml-[17px]">
        <IconButton label="Catch playhead" className="w-[64px] bg-[#2f69a6] text-[#ececec]"><CatchIcon /></IconButton>
      </Segments>
      <Segments className="ml-[183px]">
        <IconButton label="Left-click tool" className="w-[90px] gap-4 text-[#ececec]"><PointerIcon /><Chevron /></IconButton>
        <IconButton label="Command-click tool" className="w-[90px] gap-3 text-[#ececec]"><CrossIcon /><Chevron /></IconButton>
      </Segments>
      <div className="flex-1" />
      <Segments><IconButton label="Snap settings" className="w-[83px] gap-3 text-[#ececec]"><GearIcon /><Chevron /></IconButton></Segments>
      <Segments className="ml-[18px]"><IconButton label="Waveform zoom" className="w-[65px] text-[#ececec]"><WaveBars width={46} height={34} /></IconButton></Segments>
      <Segments className="ml-[18px]">
        <IconButton label="Vertical auto zoom" className="w-[67px] text-[#d8d8d8]">
          <Glyph size={34} w={3}><path d="M5 3h30M5 37h30M20 7v26M13 14l7-7 7 7M13 26l7 7 7-7" /></Glyph>
        </IconButton>
        <IconButton label="Horizontal auto zoom" className="w-[65px] text-[#d8d8d8]">
          <Glyph size={34} w={3}><path d="M3 3v34M37 3v34M7 20h26M14 13l-7 7 7 7M26 13l7 7-7 7" /></Glyph>
        </IconButton>
      </Segments>
      <Segments className="ml-[18px]">
        <ZoomSlider label="Vertical zoom" value={31} icon={<Glyph size={30} w={3}><path d="M20 2v36M11 11l9-9 9 9M11 29l9 9 9-9" /></Glyph>} />
        <ZoomSlider label="Horizontal zoom" value={0} icon={<Glyph size={30} w={3}><path d="M2 20h36M11 11l-9 9 9 9M29 11l9 9-9 9" /></Glyph>} />
      </Segments>
    </div>
  )
}

function TrackVolume({ track }: { track: Track }) {
  const mono = track.levels.length === 1
  return (
    <div className="relative ml-auto h-[26px] w-[226px] rounded-full bg-[#30322f]">
      <div className="flex h-full flex-col justify-center gap-1 pl-[10px]">
        {track.levels.map((w, i) => (
          <div
            key={i}
            className={clsx('bg-[linear-gradient(90deg,#59d26d_0,#59d26d_140px,#f0cb3e_170px)]', mono ? 'h-[14px]' : 'h-[7px]')}
            style={{ width: w }}
          />
        ))}
      </div>
      {track.peaks?.map((x, i) => (
        <div key={i} className={clsx('absolute h-[7px] w-[2px] bg-[#c0902c]', i === 0 ? 'top-1' : 'bottom-1')} style={{ left: x + 8 }} />
      ))}
      <input
        type="range"
        aria-label={`${track.name} volume`}
        defaultValue={track.value}
        className="absolute inset-0 h-full w-full appearance-none bg-transparent [&::-webkit-slider-thumb]:size-10 [&::-webkit-slider-thumb]:appearance-none [&::-webkit-slider-thumb]:rounded-full [&::-webkit-slider-thumb]:border-2 [&::-webkit-slider-thumb]:border-[#c0c4bf] [&::-webkit-slider-thumb]:bg-[#b4b8b0bb]"
      />
    </div>
  )
}

function TrackHeader({ track, index }: { track: Track; index: number }) {
  return (
    <div className={clsx('flex h-[104px] border-b-2 border-[#494949]', track.selected ? 'bg-[#848484]' : 'bg-[#606060]')}>
      <div className="grid w-[44px] place-items-center border-r-2 border-[#494949] pt-1 text-[25px] font-semibold text-[#f2f2f2]">{index + 1}</div>
      <div className="ml-[19px] grid w-16 place-items-center pt-[2px]"><TrackIcon kind={track.icon} /></div>
      <div className="ml-5 flex flex-1 flex-col">
        <h3 className="mt-3 text-[26px] font-semibold leading-[34px] text-[#f0f0f0]">{track.name}</h3>
        <div className="mt-[6px] flex items-center">
          {track.buttons.map((group) => (
            <div key={group.join('')} className="mr-3 flex h-10 divide-x-2 divide-[#414141] rounded-md border-2 border-[#414141] bg-[#545454]">
              {group.map((b) => (
                <button key={b} type="button" aria-label={`${track.name} ${b}`} className="w-[42px] text-2xl font-medium leading-none text-[#f2f2f2]">{b}</button>
              ))}
            </div>
          ))}
          <TrackVolume track={track} />
        </div>
      </div>
      <div className="ml-[23px] mr-[25px] pt-[22px]"><TrackPan bright={track.selected} label={`${track.name} pan`} /></div>
    </div>
  )
}

// deterministic jitter so the waveform looks the same on every render
const jitter = (n: number) => Math.abs(Math.sin(n * 12.9898) * 43758.5453) % 1

function wavePath(blobs: Blob[], mid: number) {
  return blobs
    .map(([from, to, amp]) => {
      let d = ''
      const n = Math.max(2, Math.round((to - from) / 2))
      const step = (to - from) / n
      // loud takes clip into blocks, quiet ones keep a spiky outline
      const rough = amp > 0.9 ? 0.15 : 0.5
      for (let i = 0; i < n; i++) {
        const edge = Math.pow(Math.sin((Math.PI * (i + 0.7)) / (n + 0.4)), amp > 0.9 ? 0.25 : 0.5)
        const h = Math.max(1.5, amp * 24 * edge * (1 - rough * jitter(from + i)))
        d += `M${(from + i * step).toFixed(1)} ${(mid - h).toFixed(1)}h${(step + 0.2).toFixed(1)}v${(h * 2).toFixed(1)}h-${(step + 0.2).toFixed(1)}z`
      }
      return d
    })
    .join('')
}

const REGION_TONE = {
  blue: 'bg-[#3c5bab] text-[#d6e1fc]',
  teal: 'bg-[#2c7ba3] text-[#cfeaf5]',
  violet: 'bg-[#5340a8] text-[#ddd6f7]',
}

function RegionBox({ region }: { region: Region }) {
  return (
    <div
      className={clsx('absolute inset-y-px overflow-hidden rounded-[10px] border-2 border-[#10131c]', REGION_TONE[region.tone])}
      style={{ left: region.x, width: region.w }}
    >
      <svg width={region.w} height="100" className="absolute inset-0" aria-hidden="true">
        {region.wave && region.mid && (
          <>
            <path d={`M0 ${region.mid}H${region.w}`} stroke="#93a9e0" strokeWidth="2" />
            <path d={wavePath(region.wave, region.mid)} fill="#d3defc" />
          </>
        )}
        {region.notes?.map(([x, y, w], i) => <rect key={i} x={x} y={y - 1} width={w} height="4" fill="currentColor" />)}
      </svg>
      <div className="relative flex items-center gap-5 whitespace-nowrap pl-[10px] pt-[3px] text-[23px] font-medium leading-8">
        {region.name}
        {region.loop && <MonoIcon />}
      </div>
    </div>
  )
}

const BAR = 34.1
const FIRST_BAR = 17
const BAR_LABELS = [1, 9, 17, 25, 33, 41, 49]

function Ruler() {
  return (
    <div className="relative h-[76px] border-b-[3px] border-[#151515] bg-[#333]">
      <svg width="100%" height="73" className="block" role="img" aria-label="Bar ruler">
        <defs>
          <pattern id="hatch" width="16" height="16" patternUnits="userSpaceOnUse" patternTransform="rotate(30)">
            <rect width="16" height="16" fill="#2b2b2b" />
            <rect width="8" height="16" fill="#373737" />
          </pattern>
        </defs>
        <rect x="18" width="1738" height="36" fill="url(#hatch)" />
        <path d="M2 2l14 16L2 34z" fill="#5b6660" />
        <rect x="18" width="1527" height="36" fill="#b99b37" />
        <path d="M0 37.500H1775" stroke="#1c1a12" strokeWidth="3" />
        {Array.from({ length: 51 }, (_, i) => (
          <path key={i} d={`M${Math.round(FIRST_BAR + i * BAR)}.5 ${i % 8 === 0 ? 39 : 44}V73`} stroke="#676767" strokeWidth="1.500" />
        ))}
        {BAR_LABELS.map((b) => {
          const x = Math.round(FIRST_BAR + (b - 1) * BAR)
          const dark = b < 46
          return (
            <g key={b}>
              {b > 1 && <path d={`M${x}.5 6V38`} stroke={dark ? '#2a2410' : '#5d5d5d'} strokeWidth="2" />}
              <text x={x + 8} y="25" fontSize="26" fontWeight="500" fill={dark ? '#2e260c' : '#cfcfcf'}>{b}</text>
            </g>
          )
        })}
        <rect x="1756" width="20" height="73" fill="#1d1d1d" />
        <path d="M1774 3v30l-15-15z" fill="#6b6b6b" />
      </svg>
    </div>
  )
}

function Timeline() {
  return (
    <div className="flex flex-1 flex-col bg-[#2b2b2b]">
      <div className="relative flex flex-1">
        <div className="relative w-[1775px] overflow-hidden">
          <Ruler />
          {TRACKS.map((t) => (
            <div key={t.name} className={clsx('relative h-[104px] border-b-2 border-[#242424]', t.selected ? 'bg-[#333]' : 'bg-[#2d2d2d]')}>
              <svg width="1756" height="102" className="block" aria-hidden="true">
                {Array.from({ length: 51 }, (_, i) => (
                  <path key={i} d={`M${Math.round(FIRST_BAR + i * BAR)}.5 0V102`} stroke="#474747" strokeWidth="2" />
                ))}
              </svg>
              {t.regions.map((r) => <RegionBox key={r.x} region={r} />)}
            </div>
          ))}
          {/* playhead */}
          <svg width="30" height="28" viewBox="0 0 30 28" className="absolute left-[831px] top-[38px]" aria-hidden="true">
            <path d="M1 1h28v12L17 27h-4L1 13z" fill="#e4e4e4" />
          </svg>
          <div className="absolute bottom-0 left-[845px] top-[64px] w-[2px] bg-[#efefef]" />
          <div className="absolute bottom-0 right-0 top-[76px] w-5 bg-[#1e1e1e]" />
        </div>
        <div className="flex-1 border-l-2 border-[#0e0e0e] bg-[#393939]" />
      </div>
      <div className="flex h-[29px] items-center border-t-[3px] border-[#111] bg-[#383838] pl-2 pr-9">
        <div className="h-[19px] w-full rounded-full bg-[#707070]" />
      </div>
    </div>
  )
}

function TracksArea() {
  return (
    <section className="flex flex-1 flex-col rounded-t-lg border-4 border-[#74abe0] bg-[#1d232a]">
      <div className="flex flex-1 flex-col overflow-hidden rounded-t-md border-x-[3px] border-t-[3px] border-[#1d232a] bg-[#484848]">
        <TracksMenuBar />
        <div className="flex flex-1">
          <div className="flex w-[692px] shrink-0 flex-col border-r-[3px] border-[#141414] bg-[#616161]">
            <div className="flex h-[76px] items-center border-b-[3px] border-[#2b2b2b] bg-[#525252] pl-4 pr-4">
              <Segments><IconButton label="New track" className="w-[65px] text-[#ececec]"><Glyph size={30} w={3}><path d="M20 2v36M2 20h36" /></Glyph></IconButton></Segments>
              <Segments className="ml-5">
                <IconButton label="Duplicate track" className="w-[65px] text-[#ececec]">
                  <Glyph size={40} w={2.6}>
                    <path d="M3 3h24v24H3z" fill="currentColor" stroke="none" />
                    <path d="M31 12h6v25H12v-6" />
                    <path d="M15 8v14M8 15h14" stroke="#3c3c3c" />
                  </Glyph>
                </IconButton>
              </Segments>
              <Segments className="ml-auto"><IconButton label="Track header options" className="w-[65px] text-[#ececec]"><DropPanelIcon size={32} /></IconButton></Segments>
            </div>
            {TRACKS.map((t, i) => <TrackHeader key={t.name} track={t} index={i} />)}
            <div className="mt-auto h-[29px] border-t-[3px] border-[#111] bg-[#383838]" />
          </div>
          <Timeline />
        </div>
      </div>
    </section>
  )
}

// ---------------------------------------------------------------------------
// Mixer
// ---------------------------------------------------------------------------

const FILTERS: [string, string][] = [
  ['Audio', 'w-[126px]'], ['Inst', 'w-[101px]'], ['Aux', 'w-[102px]'], ['Bus', 'w-[103px]'],
  ['Input', 'w-[119px]'], ['Output', 'w-[144px]'], ['Master/VCA', 'w-[205px]'], ['MIDI', 'w-[112px]'],
]

function MixerMenuBar() {
  return (
    <div className="flex h-[63px] shrink-0 items-center border-b-[3px] border-[#2c2c2c] bg-[#484848] pl-[18px] pr-[18px] pt-1">
      <Segments className="opacity-50"><IconButton label="Hierarchy up" className="w-[65px] text-[#c8c8c8]"><UpIcon /></IconButton></Segments>
      <Segments className="ml-[18px]">
        <MenuButton className="w-[126px]">Edit</MenuButton>
        <MenuButton className="w-[179px]">Options</MenuButton>
        <MenuButton className="w-[139px]">View</MenuButton>
      </Segments>
      <div className="flex-1" />
      <Segments>
        <button type="button" className={clsx(MENU_TEXT, 'w-[133px]')}>Single</button>
        <button type="button" className={clsx(MENU_TEXT, 'w-[137px] bg-[#2f69a6]')}>Tracks</button>
        <button type="button" className={clsx(MENU_TEXT, 'w-[86px]')}>All</button>
      </Segments>
      <Segments className="ml-[19px]">
        {FILTERS.map(([name, w]) => (
          <button key={name} type="button" className={clsx(MENU_TEXT, w, 'bg-[#2f69a6]')}>{name}</button>
        ))}
      </Segments>
      <Segments className="ml-[18px]">
        <IconButton label="Narrow strips" className="w-[67px] bg-[#2f69a6] text-[#ececec]">
          <Glyph size={30} w={2.6}><path d="M2 4h36v32H2zM14 4v32M26 4v32" /></Glyph>
        </IconButton>
        <IconButton label="Wide strips" className="w-[66px] text-[#ececec]">
          <Glyph size={30} w={2.6}><path d="M2 4h36v32H2zM20 4v32" /></Glyph>
        </IconButton>
      </Segments>
    </div>
  )
}

function MixerLabels() {
  const cell = 'flex items-center justify-end pr-4'
  return (
    <div className="flex w-[197px] shrink-0 flex-col border-r-[3px] border-[#151515] bg-[#4f4f4f] text-[23px] font-medium leading-none text-[#bdbdbd]">
      <div className={ROW.gain} />
      <div className={clsx(ROW.setting, cell)}>Setting</div>
      <div className={clsx(ROW.reduction, cell, 'whitespace-nowrap')}>Gain Reduction</div>
      <div className={clsx(ROW.eq, cell)}>EQ</div>
      <div className={clsx(ROW.midi, cell)}>MIDI FX</div>
      <div className={clsx(ROW.input, cell)}>Input</div>
      <div className={clsx(ROW.fx, 'flex justify-end pr-4 pt-2')}>Audio FX</div>
      <div className={clsx(ROW.sends, 'flex justify-end pr-4 pt-2')}>Sends</div>
      <div className={clsx(ROW.output, cell)}>Output</div>
      <div className={clsx(ROW.group, cell)}>Group</div>
      <div className={clsx(ROW.read, cell)}>Automation</div>
      <div className={ROW.icon} />
      <div className={clsx(ROW.pan, cell)}>Pan</div>
      <div className={clsx(ROW.db, cell)}>dB</div>
      <div className={clsx(ROW.fader, 'flex justify-end')}>
        <svg width="80" height="292" viewBox="0 0 80 292" overflow="visible" role="img" aria-label="Fader scale">
          {FADER_MARKS.map(([t, y]) => (
            <g key={y}>
              <text x="49" y={y + 5} fontSize="14" textAnchor="end" fill="#b5b5b5">{t}</text>
              <path d={`M54 ${y}H79`} stroke={y === 76 ? '#d4d4d4' : '#8a8a8a'} strokeWidth={y === 76 ? 3 : 2} />
            </g>
          ))}
          {MINOR_MARKS.map((y) => <path key={y} d={`M70 ${y}H79`} strokeWidth="1.500" stroke="#7c7c7c" />)}
        </svg>
      </div>
    </div>
  )
}

function GainKnob() {
  return (
    <svg width="36" height="36" viewBox="0 0 36 36" role="img" aria-label="Input gain" className="shrink-0">
      <path d="M9 30A15 15 0 0 1 18 3" fill="none" stroke="#3a3a3a" strokeWidth="5" />
      <path d="M18 3A15 15 0 0 1 27 30" fill="none" stroke="#86b4e4" strokeWidth="5" />
      <circle cx="18" cy="18" r="11" fill="#777" />
    </svg>
  )
}

function SendRow({ name, index }: { name?: string; index: number }) {
  if (!name) {
    return (
      <div className="flex h-[38px] items-center gap-[6px]">
        <Well className="h-full w-[85px] rounded-md" />
        <Well className="size-[33px] rounded-full" />
      </div>
    )
  }
  return (
    <div className="flex h-[38px] items-center gap-[6px]">
      <Slot tone="blue" className={clsx(SLOT_TEXT, 'h-full w-[85px]')}>{name}</Slot>
      <svg width="34" height="34" viewBox="0 0 34 34" role="img" aria-label={`${name} send level`} className="shrink-0">
        <path d="M8 29A14 14 0 1 1 26 29" fill="none" stroke="#2b2d2c" strokeWidth="5" />
        {index === 1 && <path d="M9 30A14 14 0 0 1 3 21" fill="none" stroke="#86b4e4" strokeWidth="6" />}
        <circle cx="17" cy="17" r="9" fill="#8a8a8a" />
      </svg>
    </div>
  )
}

function ChannelStrip({ channel: c }: { channel: Channel }) {
  const light = c.selected
  const master = c.setting === undefined
  return (
    <section
      aria-label={c.name}
      className={clsx('flex min-w-0 flex-col border-r-2 border-[#444]', light ? 'bg-[#858585]' : 'bg-[#616161]')}
    >
      <div className="flex flex-col px-2">
        <div className={clsx(ROW.gain, 'flex items-center gap-[5px]')}>
          {c.gain && (
            <>
              <output className="grid h-full w-[85px] place-items-center bg-[#2c2c2c] text-[22px] font-semibold text-[#f2f2f2]">0</output>
              <GainKnob />
            </>
          )}
        </div>
        <div className={clsx(ROW.setting, 'flex')}>
          {!master && <Slot tone={c.setting ? 'plain' : 'dim'} className={clsx(SLOT_TEXT, 'w-full')}>{c.setting || 'Setting'}</Slot>}
        </div>
        <div className={ROW.reduction}>
          {!master && (c.reduction ? <div className="h-full bg-[#2c2c2c]" /> : <Well light={light} className="h-full" />)}
        </div>
        <div className={ROW.eq}>
          {!master &&
            (c.curve ? (
              <div className="flex h-full items-center bg-[#262626] px-2"><div className="h-1 w-full border-b border-[#111] bg-[#5a82b4]" /></div>
            ) : (
              <Well light={light} className="h-full" />
            ))}
        </div>
        <div className={ROW.midi}>{c.instrument && <Well className="h-full rounded-md" />}</div>
        <div className={clsx(ROW.input, 'flex')}>
          {c.instrument && <Slot tone="blue" className={clsx(SLOT_TEXT, 'w-full')}>{c.instrument}</Slot>}
          {c.input === '' && <Slot className="w-full" label="Format"><StereoIcon /></Slot>}
          {c.input && (
            <div className={clsx('flex w-full divide-x-2 divide-[#3d3d3d] rounded-md border-2 border-[#3d3d3d] bg-[#535353] leading-none text-[#f2f2f2]', SLOT_TEXT)}>
              <button type="button" aria-label="Format" className="grid w-[38px] place-items-center">{c.stereo ? <StereoIcon /> : <MonoIcon />}</button>
              <button type="button" className="flex-1 whitespace-nowrap">{c.input}</button>
            </div>
          )}
        </div>
        <div className={ROW.fx}>
          {!master && (
            <div className={clsx('flex h-full flex-col rounded-md border-2', light ? 'border-[#6a6a6a] bg-[#707070]' : 'border-[#484848] bg-[#525252]')}>
              {c.fx.map((f) => (
                <Slot key={f} tone={f === 'Chorus' ? 'plain' : 'blue'} className={clsx(SLOT_TEXT, '-mx-[2px] mb-[-2px] h-[38px] -translate-y-[2px]')}>{f}</Slot>
              ))}
            </div>
          )}
        </div>
        <div className={clsx(ROW.sends, 'flex flex-col gap-1')}>
          {c.sends && (
            <>
              <SendRow name={c.sends[0]} index={0} />
              <SendRow name={c.sends[1]} index={1} />
              <Well className="h-5 w-[85px] rounded-md" />
            </>
          )}
        </div>
        <div className={clsx(ROW.output, 'flex')}>{c.output && <Slot className={clsx(SLOT_TEXT, 'w-full')}>St Out</Slot>}</div>
        <div className={ROW.group}><Well light={light} className="mx-[2px] h-full" /></div>
        <div className={clsx(ROW.read, 'flex')}><Slot tone={c.read ? 'green' : 'plain'} className={clsx(SLOT_TEXT, 'w-full')}>Read</Slot></div>
        <div className={clsx(ROW.icon, 'flex items-center justify-center')}><TrackIcon kind={c.icon} small /></div>
        <div className={clsx(ROW.pan, 'flex justify-center')}>{c.pan && <Knob size={74} bright={light} label={`${c.name} pan`} />}</div>
        <div className={clsx(ROW.db, 'mx-[2px] grid gap-[6px]', c.peak === undefined ? 'grid-cols-1' : 'grid-cols-2')}>
          <Db className={DARK_DB}>{c.db}</Db>
          {c.peak !== undefined && (
            <Db className={clsx(!c.peakTone?.startsWith('bg') && 'bg-[#2c2c2c]', c.peakTone, c.peak.length > 4 ? 'text-xl' : 'text-[22px]')}>{c.peak}</Db>
          )}
        </div>
      </div>
      <div className={ROW.fader}><Fader value={c.fader} meter={c.meter} label={c.name} className={clsx(master && 'ml-[34px]')} /></div>
      <div className="flex flex-col px-2">
        <div className={clsx(ROW.extra, 'flex justify-end')}>
          {c.extra && (
            <div className="flex w-[59px] divide-x-2 divide-[#3d3d3d] rounded-md border-2 border-[#3d3d3d] bg-[#535353] text-2xl leading-none text-[#f2f2f2]">
              {c.extra.map((b) => <button key={b} type="button" className="flex-1">{b}</button>)}
            </div>
          )}
        </div>
        <div className={clsx(ROW.mute, 'grid grid-cols-2 gap-[6px]')}>
          {c.buttons.map((b) => <Slot key={b} className={LETTER_TEXT}>{b}</Slot>)}
        </div>
      </div>
      <h3 className={clsx(ROW.name, c.tint, 'grid place-items-center whitespace-nowrap pb-1 text-[22px] font-semibold leading-none text-[#e8ecf5]')}>{c.name}</h3>
    </section>
  )
}

function Mixer() {
  return (
    <section className="ml-1 mr-1 mt-[11px] flex shrink-0 flex-col overflow-hidden rounded-t-lg border-x-2 border-t-2 border-[#222] bg-[#616161]">
      <MixerMenuBar />
      <div className="flex">
        <MixerLabels />
        <div className="grid w-[1139px] shrink-0 grid-cols-8">
          {CHANNELS.map((c) => <ChannelStrip key={c.name} channel={c} />)}
        </div>
        <div className="flex-1" />
        <div className="w-[30px] border-l-2 border-[#0e0e0e] bg-[#393939]" />
      </div>
      <div className="flex h-[31px] items-center border-t-[3px] border-[#111] bg-[#383838] pl-[7px]">
        <div className="h-[18px] w-[49%] rounded-full bg-[#707070]" />
      </div>
    </section>
  )
}

export default function App() {
  return (
    <div className="flex min-h-screen flex-col bg-[#8e8e8e] font-['Inter','Liberation_Sans',sans-serif]">
      <MeterGradients />
      <Toolbar />
      <main className="flex flex-1">
        <Inspector />
        <div className="ml-[2px] flex min-w-0 flex-1 flex-col">
          <TracksArea />
          <Mixer />
        </div>
      </main>
    </div>
  )
}
